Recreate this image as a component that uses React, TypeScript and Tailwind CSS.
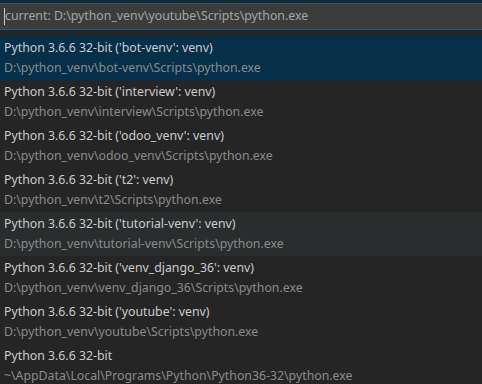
import * as React from 'react';

interface Interpreter {
  label: string;
  detail: string;
}

const interpreters: Interpreter[] = [
  { label: "Python 3.6.6 32-bit ('bot-venv': venv)", detail: 'D:\\python_venv\\bot-venv\\Scripts\\python.exe' },
  { label: "Python 3.6.6 32-bit ('interview': venv)", detail: 'D:\\python_venv\\interview\\Scripts\\python.exe' },
  { label: "Python 3.6.6 32-bit ('odoo_venv': venv)", detail: 'D:\\python_venv\\odoo_venv\\Scripts\\python.exe' },
  { label: "Python 3.6.6 32-bit ('t2': venv)", detail: 'D:\\python_venv\\t2\\Scripts\\python.exe' },
  { label: "Python 3.6.6 32-bit ('tutorial-venv': venv)", detail: 'D:\\python_venv\\tutorial-venv\\Scripts\\python.exe' },
  { label: "Python 3.6.6 32-bit ('venv_django_36': venv)", detail: 'D:\\python_venv\\venv_django_36\\Scripts\\python.exe' },
  { label: "Python 3.6.6 32-bit ('youtube': venv)", detail: 'D:\\python_venv\\youtube\\Scripts\\python.exe' },
  { label: 'Python 3.6.6 32-bit', detail: '~\\AppData\\Local\\Programs\\Python\\Python36-32\\python.exe' },
];

export default function App() {
  const selected = 0;
  const hovered = 4;

  return (
    <div className="w-[482px] h-[384px] overflow-hidden bg-[#252526] pt-[3px] text-[12.3px] font-['Noto_Sans',sans-serif]">
      <div className="flex h-[27px] items-center border-y border-[#0e639c] bg-[#3c3c3c] pl-1">
        <span className="h-[17px] w-px bg-[#cccccc]" />
        <span className="text-[#a6a6a6] leading-none">current: D:\python_venv\youtube\Scripts\python.exe</span>
      </div>

      <div className="mt-[6px] flex flex-col">
        {interpreters.map((item, i) => (
          <div
            key={item.detail}
            className={
              'flex h-[44px] flex-col pt-[2px] px-1 ' +
              (i === selected ? 'bg-[#062f4a]' : i === hovered ? 'bg-[#2a2d2e]' : '')
            }
          >
            <div className="leading-[20px] text-[#cccccc]">{item.label}</div>
            <div className="leading-[20px] text-[#8b8b8b]">{item.detail}</div>
          </div>
        ))}
      </div>
    </div>
  );
}
